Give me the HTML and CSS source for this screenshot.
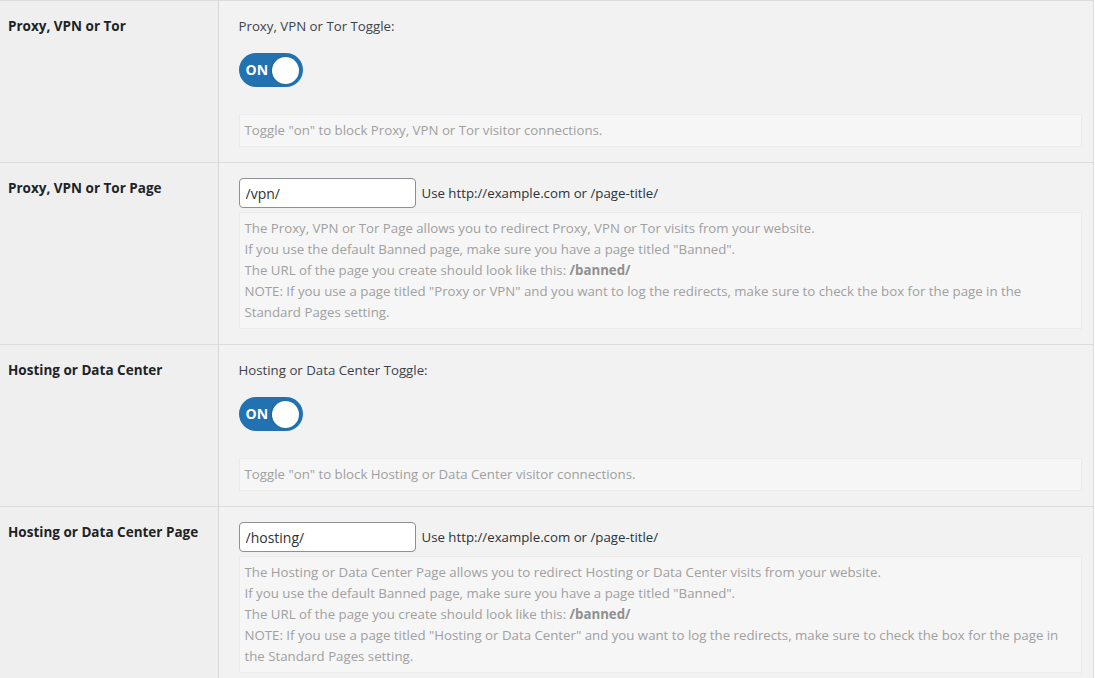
FILE: index.html
```html
<!DOCTYPE html>
<html lang="en">
<head>
<meta charset="utf-8">
<title>Settings</title>
<link rel="stylesheet" href="styles.css">
</head>
<body>
<table class="form-table">
  <tbody>
    <tr>
      <th class="label-cell">Proxy, VPN or Tor</th>
      <td class="field-cell">
        <p class="field-title">Proxy, VPN or Tor Toggle:</p>
        <label class="switch"><span class="switch-text">ON</span><span class="knob"></span></label>
        <p class="description toggle-desc">Toggle "on" to block Proxy, VPN or Tor visitor connections.</p>
      </td>
    </tr>
    <tr>
      <th class="label-cell">Proxy, VPN or Tor Page</th>
      <td class="field-cell">
        <div class="input-row">
          <input class="text-input" type="text" value="/vpn/">
          <span class="hint">Use http://example.com or /page-title/</span>
        </div>
        <p class="description page-desc">The Proxy, VPN or Tor Page allows you to redirect Proxy, VPN or Tor visits from your website.<br>If you use the default Banned page, make sure you have a page titled "Banned".<br>The URL of the page you create should look like this: <strong>/banned/</strong><br>NOTE: If you use a page titled "Proxy or VPN" and you want to log the redirects, make sure to check the box for the page in the Standard Pages setting.</p>
      </td>
    </tr>
    <tr>
      <th class="label-cell">Hosting or Data Center</th>
      <td class="field-cell">
        <p class="field-title">Hosting or Data Center Toggle:</p>
        <label class="switch"><span class="switch-text">ON</span><span class="knob"></span></label>
        <p class="description toggle-desc">Toggle "on" to block Hosting or Data Center visitor connections.</p>
      </td>
    </tr>
    <tr>
      <th class="label-cell">Hosting or Data Center Page</th>
      <td class="field-cell">
        <div class="input-row">
          <input class="text-input" type="text" value="/hosting/">
          <span class="hint">Use http://example.com or /page-title/</span>
        </div>
        <p class="description page-desc">The Hosting or Data Center Page allows you to redirect Hosting or Data Center visits from your website.<br>If you use the default Banned page, make sure you have a page titled "Banned".<br>The URL of the page you create should look like this: <strong>/banned/</strong><br>NOTE: If you use a page titled "Hosting or Data Center" and you want to log the redirects, make sure to check the box for the page in the Standard Pages setting.</p>
      </td>
    </tr>
  </tbody>
</table>
</body>
</html>
```
FILE: styles.css
```css
html, body {
  margin: 0;
  padding: 0;
  background: #ffffff;
}

body {
  font-family: "Open Sans", "Noto Sans", sans-serif;
  font-size: 13.25px;
  line-height: 20px;
  color: #3c434a;
}

.form-table {
  width: 1094px;
  border-collapse: collapse;
  table-layout: fixed;
  border-top: 1px solid #dcdcdc;
  border-right: 1px solid #dcdcdc;
}

.form-table tr {
  border-bottom: 1px solid #dcdcdc;
}

.label-cell {
  width: 218px;
  box-sizing: border-box;
  background: #efefef;
  border-right: 1px solid #d6d6d6;
  text-align: left;
  vertical-align: top;
  padding: 15px 10px 15px 8px;
  font-size: 13.5px;
  font-weight: 700;
  color: #1d2327;
  line-height: 20px;
}

.field-cell {
  background: #f2f2f2;
  vertical-align: top;
  padding: 15px 11px 15px 20px;
}

.field-title {
  margin: 0;
  line-height: 20px;
}

.switch {
  margin-top: 17px;
  width: 64px;
  height: 34px;
  box-sizing: border-box;
  border-radius: 17px;
  background: #2271b1;
  display: flex;
  align-items: center;
  justify-content: space-between;
  padding: 0 4px 0 7px;
}

.switch-text {
  color: #ffffff;
  font-weight: 700;
  font-size: 14px;
  line-height: 1;
}

.knob {
  width: 27px;
  height: 27px;
  border-radius: 50%;
  background: #ffffff;
  box-shadow: -1px 0 2px rgba(0, 0, 0, 0.15);
}

.description {
  margin: 0;
  background: #f6f6f6;
  border: 1px solid #ebebeb;
  padding: 5px;
  line-height: 21px;
  color: #a0a0a0;
}

.description strong {
  color: #909090;
}

.toggle-desc {
  margin-top: 27px;
}

.page-desc {
  margin-top: 4px;
}

.input-row {
  display: flex;
  align-items: center;
  gap: 6px;
}

.text-input {
  width: 177px;
  height: 30px;
  box-sizing: border-box;
  margin: 0;
  border: 1px solid #8c8f94;
  border-radius: 4px;
  background: #ffffff;
  padding: 0 6px;
  font-family: inherit;
  font-size: 14px;
  color: #2c3338;
}

.hint {
  color: #2c3338;
}
```
